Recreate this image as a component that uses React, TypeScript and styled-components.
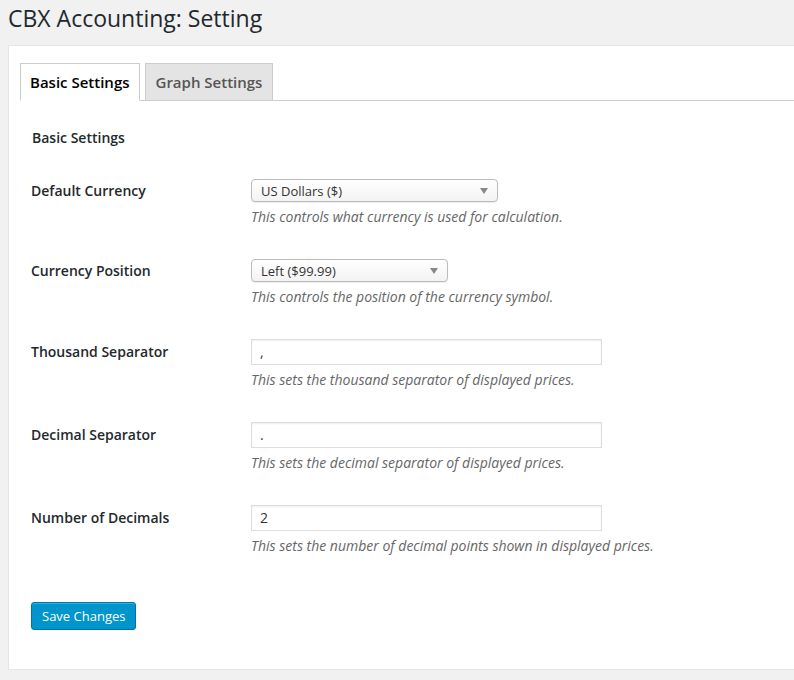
import React from "react";
import styled, { createGlobalStyle } from "styled-components";

const Global = createGlobalStyle`
  html, body { margin: 0; background: #f1f1f1; overflow: hidden; }
  body { font-family: "Open Sans", "Noto Sans", sans-serif; color: #23282d; }
`;

const Page = styled.div`
  padding: 0 0 0 8px;
  width: 820px;
`;

const Title = styled.h1`
  margin: 0;
  height: 45px;
  padding-top: 1px;
  box-sizing: border-box;
  font-size: 23px;
  font-weight: 400;
  line-height: 34px;
  color: #23282d;
`;

const Panel = styled.div`
  background: #fff;
  border: 1px solid #e5e5e5;
  box-shadow: 0 1px 1px rgba(0, 0, 0, 0.04);
  padding: 17px 0 0 11px;
  height: 625px;
  box-sizing: border-box;
`;

const TabBar = styled.div`
  display: flex;
  gap: 5px;
  border-bottom: 1px solid #ccc;
  height: 37px;
`;

const Tab = styled.div<{ $active?: boolean }>`
  padding: 0 ${({ $active }) => ($active ? 9 : 10)}px;
  height: 36px;
  line-height: 36px;
  font-size: 15px;
  font-weight: 600;
  border: 1px solid #ccc;
  border-bottom: ${({ $active }) => ($active ? "1px solid #fff" : "none")};
  background: ${({ $active }) => ($active ? "#fff" : "#e4e4e4")};
  color: ${({ $active }) => ($active ? "#000" : "#555")};
`;

const Content = styled.div`
  padding: 0 0 0 11px;
`;

const Heading = styled.h2`
  margin: 0;
  padding: 0 0 0 1px;
  height: 78px;
  line-height: 74px;
  font-size: 14px;
  font-weight: 600;
  color: #23282d;
`;

const Row = styled.div`
  display: flex;
  margin-bottom: 33px;
`;

const Label = styled.div<{ $h: number }>`
  width: 220px;
  font-size: 14px;
  font-weight: 600;
  line-height: ${({ $h }) => $h}px;
  color: #23282d;
`;

const Field = styled.div`
  display: flex;
  flex-direction: column;
`;

const Select = styled.div<{ $w: number }>`
  width: ${({ $w }) => $w}px;
  height: 23px;
  box-sizing: border-box;
  border: 1px solid #bbb;
  border-radius: 4px;
  background: linear-gradient(#fff, #f3f3f3);
  box-shadow: 0 1px 1px rgba(0, 0, 0, 0.08);
  display: flex;
  align-items: center;
  justify-content: space-between;
  padding: 0 9px;
  font-size: 13px;
  color: #333;
  &::after {
    content: "";
    border-left: 4px solid transparent;
    border-right: 4px solid transparent;
    border-top: 6px solid #888;
  }
`;

const Input = styled.div`
  width: 351px;
  height: 26px;
  box-sizing: border-box;
  border: 1px solid #ddd;
  box-shadow: inset 0 1px 2px rgba(0, 0, 0, 0.07);
  padding: 0 8px;
  font-size: 14px;
  line-height: 24px;
  color: #32373c;
`;

const Desc = styled.p`
  margin: 6px 0 0;
  font-size: 14px;
  line-height: 18px;
  font-style: italic;
  color: #666;
`;

const Button = styled.button`
  margin: 14px 0 0 0;
  height: 28px;
  padding: 0 10px;
  font-family: inherit;
  font-size: 13px;
  color: #fff;
  background: #0095cc;
  border: 1px solid #0073aa;
  border-radius: 3px;
  box-shadow: inset 0 1px 0 rgba(120, 200, 230, 0.5);
`;

type Item = { label: string; desc: string; select?: number; value: string };

const items: Item[] = [
  { label: "Default Currency", select: 247, value: "US Dollars ($)", desc: "This controls what currency is used for calculation." },
  { label: "Currency Position", select: 197, value: "Left ($99.99)", desc: "This controls the position of the currency symbol." },
  { label: "Thousand Separator", value: ",", desc: "This sets the thousand separator of displayed prices." },
  { label: "Decimal Separator", value: ".", desc: "This sets the decimal separator of displayed prices." },
  { label: "Number of Decimals", value: "2", desc: "This sets the number of decimal points shown in displayed prices." },
];

export default function App() {
  return (
    <Page>
      <Global />
      <Title>CBX Accounting: Setting</Title>
      <Panel>
        <TabBar>
          <Tab $active>Basic Settings</Tab>
          <Tab>Graph Settings</Tab>
        </TabBar>
        <Content>
          <Heading>Basic Settings</Heading>
          {items.map((it) => (
            <Row key={it.label}>
              <Label $h={it.select ? 23 : 26}>{it.label}</Label>
              <Field>
                {it.select ? <Select $w={it.select}>{it.value}</Select> : <Input>{it.value}</Input>}
                <Desc>{it.desc}</Desc>
              </Field>
            </Row>
          ))}
          <Button>Save Changes</Button>
        </Content>
      </Panel>
    </Page>
  );
}
